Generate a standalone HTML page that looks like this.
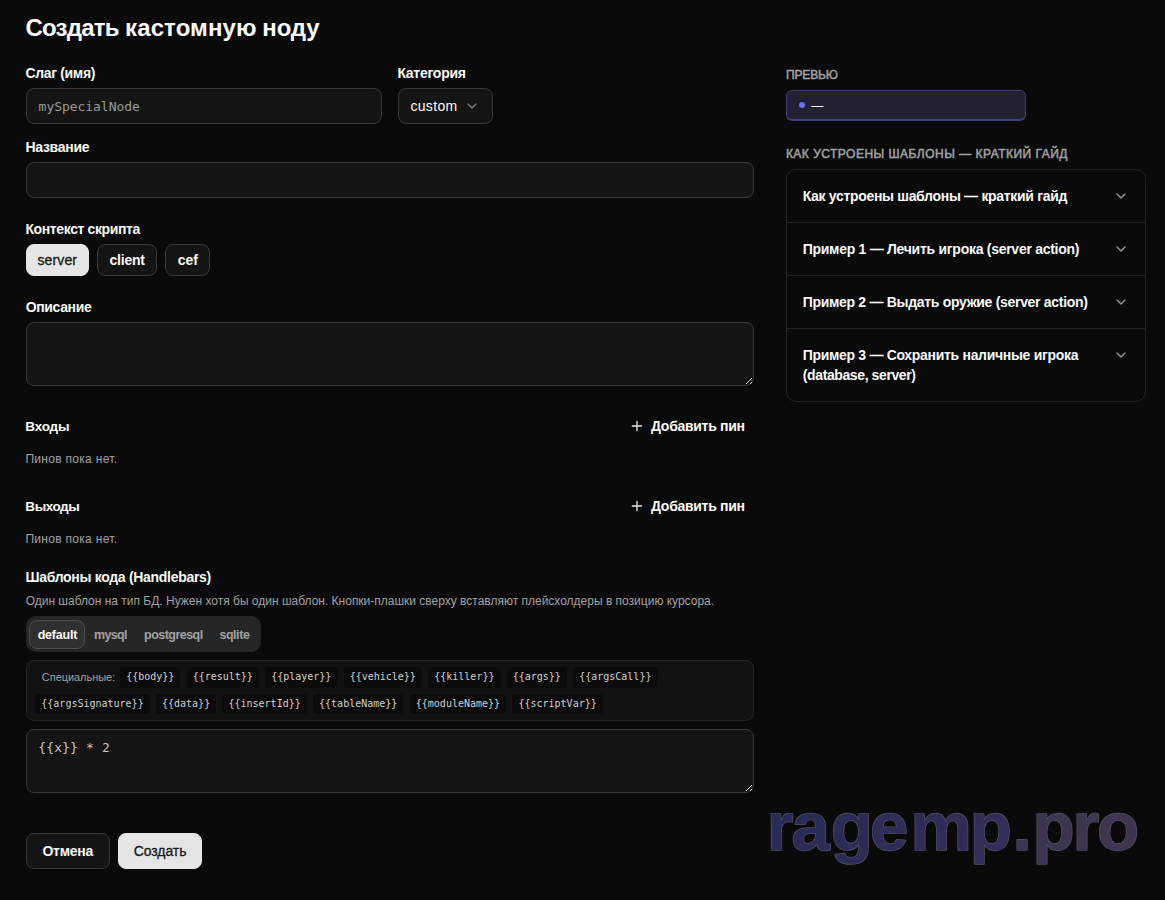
<!DOCTYPE html>
<html lang="ru">
<head>
<meta charset="utf-8">
<title>Создать кастомную ноду</title>
<style>
*{box-sizing:border-box;margin:0;padding:0}
html,body{width:1165px;height:900px;overflow:hidden;background:#0a0a0a;color:#fafafa;font-family:"Liberation Sans",sans-serif}
body{position:relative}
.a{position:absolute}
.t{position:absolute;white-space:nowrap;line-height:20px}
.box{position:absolute;background:#151515;border:1px solid #383838;border-radius:8px}
.chip{position:absolute;height:20.5px;border-radius:4px;background:#0b0b0b;font-family:"DejaVu Sans Mono","Liberation Mono",monospace;font-size:10px;line-height:20.5px;color:#d0d0d0;text-align:center;white-space:nowrap}
.ln{position:absolute;left:787px;width:358px;height:1px;background:#242424}
svg{position:absolute;overflow:visible}
</style>
</head>
<body>
<div class="box" style="left:26px;top:88px;width:356px;height:36px"></div>
<div class="box" style="left:398px;top:88px;width:95px;height:36px"></div>
<svg style="left:464px;top:98px" width="16" height="16" viewBox="0 0 24 24" fill="none" stroke="#7d7d7d" stroke-width="2" stroke-linecap="round" stroke-linejoin="round"><path d="m6 9 6 6 6-6"/></svg>
<div class="box" style="left:26px;top:162px;width:728px;height:36px"></div>
<div class="box" style="left:26px;top:244px;width:63px;height:32px;background:#e5e5e5;border-color:#e5e5e5"></div>
<div class="box" style="left:97px;top:244px;width:60px;height:32px"></div>
<div class="box" style="left:165px;top:244px;width:45px;height:32px"></div>
<div class="box" style="left:26px;top:322px;width:728px;height:64px"></div>
<svg style="left:0;top:0" width="1165" height="900" viewBox="0 0 1165 900" shape-rendering="crispEdges"><path d="M745 383h1v1h-1zM746 382h1v1h-1zM747 381h1v1h-1zM748 380h1v1h-1zM749 379h1v1h-1zM749 383h1v1h-1zM750 378h1v1h-1zM750 382h1v1h-1zM751 377h1v1h-1zM751 381h1v1h-1z" fill="#000"/><path d="M746 383h1v1h-1zM747 382h1v1h-1zM748 381h1v1h-1zM749 380h1v1h-1zM750 379h1v1h-1zM751 378h1v1h-1zM750 383h1v1h-1zM751 382h1v1h-1z" fill="#e8e8e8"/></svg>
<svg style="left:629px;top:418px" width="16" height="16" viewBox="0 0 24 24" fill="none" stroke="#e2e2e2" stroke-width="2" stroke-linecap="round" stroke-linejoin="round"><path d="M5 12h14M12 5v14"/></svg>
<svg style="left:629px;top:498px" width="16" height="16" viewBox="0 0 24 24" fill="none" stroke="#e2e2e2" stroke-width="2" stroke-linecap="round" stroke-linejoin="round"><path d="M5 12h14M12 5v14"/></svg>
<div class="a" style="left:26px;top:616px;width:235px;height:36px;border-radius:10px;background:#262626"></div>
<div class="a" style="left:29px;top:620px;width:56px;height:29px;border-radius:8px;background:#303030;border:1px solid #4d4d4d"></div>
<div class="box" style="left:26px;top:660px;width:728px;height:60.5px;background:#121212;border-color:#242424"></div>
<div class="box" style="left:26px;top:729px;width:728px;height:64px"></div>
<svg style="left:0;top:0" width="1165" height="900" viewBox="0 0 1165 900" shape-rendering="crispEdges"><path d="M745 790h1v1h-1zM746 789h1v1h-1zM747 788h1v1h-1zM748 787h1v1h-1zM749 786h1v1h-1zM749 790h1v1h-1zM750 785h1v1h-1zM750 789h1v1h-1zM751 784h1v1h-1zM751 788h1v1h-1z" fill="#000"/><path d="M746 790h1v1h-1zM747 789h1v1h-1zM748 788h1v1h-1zM749 787h1v1h-1zM750 786h1v1h-1zM751 785h1v1h-1zM750 790h1v1h-1zM751 789h1v1h-1z" fill="#e8e8e8"/></svg>
<div class="box" style="left:26px;top:833px;width:84px;height:36px"></div>
<div class="box" style="left:118px;top:833px;width:84px;height:36px;background:#e5e5e5;border-color:#e5e5e5"></div>
<div class="a" style="left:786px;top:90px;width:240px;height:31px;border-radius:6px;background:#212133;border:1px solid #3d3f7a;border-bottom-width:2px"></div>
<div class="a" style="left:799px;top:102.2px;width:6px;height:6px;border-radius:50%;background:#6c6ff7"></div>
<div class="a" style="left:786px;top:169px;width:360px;height:233px;border:1px solid #242424;border-radius:10px"></div>
<div class="ln" style="top:222px"></div>
<div class="ln" style="top:275px"></div>
<div class="ln" style="top:328px"></div>
<svg style="left:1113px;top:188px" width="16" height="16" viewBox="0 0 24 24" fill="none" stroke="#9a9a9a" stroke-width="2" stroke-linecap="round" stroke-linejoin="round"><path d="m6 9 6 6 6-6"/></svg>
<svg style="left:1113px;top:241px" width="16" height="16" viewBox="0 0 24 24" fill="none" stroke="#9a9a9a" stroke-width="2" stroke-linecap="round" stroke-linejoin="round"><path d="m6 9 6 6 6-6"/></svg>
<svg style="left:1113px;top:294px" width="16" height="16" viewBox="0 0 24 24" fill="none" stroke="#9a9a9a" stroke-width="2" stroke-linecap="round" stroke-linejoin="round"><path d="m6 9 6 6 6-6"/></svg>
<svg style="left:1113px;top:347px" width="16" height="16" viewBox="0 0 24 24" fill="none" stroke="#9a9a9a" stroke-width="2" stroke-linecap="round" stroke-linejoin="round"><path d="m6 9 6 6 6-6"/></svg>
<div class="chip" style="left:120.1px;top:667.2px;width:60.4px">{{body}}</div>
<div class="chip" style="left:186.5px;top:667.2px;width:72.5px">{{result}}</div>
<div class="chip" style="left:265.0px;top:667.2px;width:72.5px">{{player}}</div>
<div class="chip" style="left:343.5px;top:667.2px;width:78.5px">{{vehicle}}</div>
<div class="chip" style="left:428.1px;top:667.2px;width:72.5px">{{killer}}</div>
<div class="chip" style="left:506.6px;top:667.2px;width:60.4px">{{args}}</div>
<div class="chip" style="left:573.0px;top:667.2px;width:84.6px">{{argsCall}}</div>
<div class="chip" style="left:35.1px;top:693.7px;width:114.8px">{{argsSignature}}</div>
<div class="chip" style="left:155.9px;top:693.7px;width:60.4px">{{data}}</div>
<div class="chip" style="left:222.3px;top:693.7px;width:84.6px">{{insertId}}</div>
<div class="chip" style="left:312.9px;top:693.7px;width:90.6px">{{tableName}}</div>
<div class="chip" style="left:409.6px;top:693.7px;width:96.7px">{{moduleName}}</div>
<div class="chip" style="left:512.3px;top:693.7px;width:90.6px">{{scriptVar}}</div>
<div class="t" style="left:25.42px;top:18.00px;font-size:24px;font-weight:700;color:#fafafa;letter-spacing:-0.765px;">Создать</div>
<div class="t" style="left:125.07px;top:18.00px;font-size:24px;font-weight:700;color:#fafafa;letter-spacing:0.110px;">кастомную</div>
<div class="t" style="left:262.30px;top:18.00px;font-size:24px;font-weight:700;color:#fafafa;letter-spacing:-0.141px;">ноду</div>
<div class="t" style="left:25.53px;top:63.00px;font-size:14px;font-weight:700;color:#fafafa;letter-spacing:-0.346px;">Слаг (имя)</div>
<div class="t" style="left:397.39px;top:63.00px;font-size:14px;font-weight:700;color:#fafafa;letter-spacing:-0.265px;">Категория</div>
<div class="t" style="left:38.60px;top:97.00px;font-size:13px;font-weight:400;color:#9a9a9a;font-family:'DejaVu Sans Mono','Liberation Mono',monospace;letter-spacing:-0.042px;">mySpecialNode</div>
<div class="t" style="left:410.41px;top:96.00px;font-size:14px;font-weight:400;color:#fafafa;letter-spacing:0.327px;">custom</div>
<div class="t" style="left:25.39px;top:137.00px;font-size:14px;font-weight:700;color:#fafafa;letter-spacing:-0.279px;">Название</div>
<div class="t" style="left:25.39px;top:219.00px;font-size:14px;font-weight:700;color:#fafafa;letter-spacing:-0.377px;">Контекст скрипта</div>
<div class="t" style="left:37.40px;top:250.00px;font-size:14px;font-weight:400;color:#171717;letter-spacing:0.144px;-webkit-text-stroke:0.3px #171717">server</div>
<div class="t" style="left:109.44px;top:250.00px;font-size:14px;font-weight:700;color:#fafafa;letter-spacing:-0.204px;">client</div>
<div class="t" style="left:177.82px;top:250.00px;font-size:14px;font-weight:700;color:#fafafa;letter-spacing:-0.008px;">cef</div>
<div class="t" style="left:25.63px;top:297.00px;font-size:14px;font-weight:700;color:#fafafa;letter-spacing:-0.341px;">Описание</div>
<div class="t" style="left:25.33px;top:417.00px;font-size:13.5px;font-weight:700;color:#fafafa;letter-spacing:-0.194px;">Входы</div>
<div class="t" style="left:651.02px;top:416.00px;font-size:14px;font-weight:700;color:#fafafa;letter-spacing:-0.293px;">Добавить пин</div>
<div class="t" style="left:25.39px;top:449.00px;font-size:12px;font-weight:400;color:#a1a1a1;letter-spacing:0.302px;">Пинов пока нет.</div>
<div class="t" style="left:25.33px;top:497.00px;font-size:13.5px;font-weight:700;color:#fafafa;letter-spacing:-0.450px;">Выходы</div>
<div class="t" style="left:651.02px;top:496.00px;font-size:14px;font-weight:700;color:#fafafa;letter-spacing:-0.293px;">Добавить пин</div>
<div class="t" style="left:25.39px;top:529.00px;font-size:12px;font-weight:400;color:#a1a1a1;letter-spacing:0.302px;">Пинов пока нет.</div>
<div class="t" style="left:25.39px;top:567.00px;font-size:14px;font-weight:700;color:#fafafa;letter-spacing:-0.301px;">Шаблоны кода (Handlebars)</div>
<div class="t" style="left:25.66px;top:591.00px;font-size:12px;font-weight:400;color:#a1a1a1;letter-spacing:-0.005px;">Один шаблон на тип БД. Нужен хотя бы один шаблон. Кнопки-плашки сверху вставляют плейсхолдеры в позицию курсора.</div>
<div class="t" style="left:37.68px;top:625.00px;font-size:12.5px;font-weight:700;color:#fafafa;letter-spacing:-0.226px;">default</div>
<div class="t" style="left:94.05px;top:625.00px;font-size:12.5px;font-weight:700;color:#a1a1a1;letter-spacing:-0.695px;">mysql</div>
<div class="t" style="left:144.05px;top:625.00px;font-size:12.5px;font-weight:700;color:#a1a1a1;letter-spacing:-0.532px;">postgresql</div>
<div class="t" style="left:219.38px;top:625.00px;font-size:12.5px;font-weight:700;color:#a1a1a1;letter-spacing:-0.437px;">sqlite</div>
<div class="t" style="left:41.85px;top:667.00px;font-size:11px;font-weight:400;color:#a1a1a1;letter-spacing:-0.053px;">Специальные:</div>
<div class="t" style="left:38.22px;top:738.00px;font-size:13px;font-weight:400;color:#c4c4c4;font-family:'DejaVu Sans Mono','Liberation Mono',monospace;letter-spacing:0.132px;">{{x}} * 2</div>
<div class="t" style="left:42.43px;top:841.00px;font-size:14px;font-weight:700;color:#fafafa;letter-spacing:-0.262px;">Отмена</div>
<div class="t" style="left:133.66px;top:841.00px;font-size:14px;font-weight:400;color:#171717;letter-spacing:-0.065px;-webkit-text-stroke:0.3px #171717">Создать</div>
<div class="t" style="left:786.06px;top:65.00px;font-size:12px;font-weight:400;color:#a1a1a1;letter-spacing:-0.163px;-webkit-text-stroke:0.5px #a1a1a1">ПРЕВЬЮ</div>
<div class="t" style="left:811.22px;top:96.00px;font-size:12px;font-weight:400;color:#fafafa;letter-spacing:3.592px;">—</div>
<div class="t" style="left:785.90px;top:144.00px;font-size:12px;font-weight:400;color:#a1a1a1;letter-spacing:0.491px;-webkit-text-stroke:0.5px #a1a1a1">КАК УСТРОЕНЫ ШАБЛОНЫ — КРАТКИЙ ГАЙД</div>
<div class="t" style="left:802.66px;top:186.00px;font-size:14px;font-weight:700;color:#fafafa;letter-spacing:-0.311px;">Как устроены шаблоны — краткий гайд</div>
<div class="t" style="left:802.66px;top:239.00px;font-size:14px;font-weight:700;color:#fafafa;letter-spacing:-0.273px;">Пример 1 — Лечить игрока (server action)</div>
<div class="t" style="left:802.66px;top:292.00px;font-size:14px;font-weight:700;color:#fafafa;letter-spacing:-0.302px;">Пример 2 — Выдать оружие (server action)</div>
<div class="t" style="left:802.66px;top:345.00px;font-size:14px;font-weight:700;color:#fafafa;letter-spacing:-0.305px;">Пример 3 — Сохранить наличные игрока</div>
<div class="t" style="left:802.87px;top:365.00px;font-size:14px;font-weight:700;color:#fafafa;letter-spacing:-0.399px;">(database, server)</div>
<svg style="left:0;top:0" width="1165" height="900" viewBox="0 0 1165 900"><defs><linearGradient id="wg1" x1="771" x2="1009" y1="0" y2="0" gradientUnits="userSpaceOnUse"><stop offset="0" stop-color="#282b56"/><stop offset="1" stop-color="#322f58"/></linearGradient><linearGradient id="wg2" x1="1015" x2="1137" y1="0" y2="0" gradientUnits="userSpaceOnUse"><stop offset="0" stop-color="#3b3452"/><stop offset="1" stop-color="#40354d"/></linearGradient></defs>
<text y="850" font-family="Liberation Sans, sans-serif" font-weight="700" font-size="69" stroke="#505066" stroke-width="1.5" stroke-linejoin="round" paint-order="stroke"><tspan x="766.7 791.5 830.7 870.1 910.5 969.8" fill="url(#wg1)">ragemp</tspan><tspan x="1012.4 1032.4 1072.5 1097.1" fill="url(#wg2)">.pro</tspan></text></svg>
</body>
</html>
